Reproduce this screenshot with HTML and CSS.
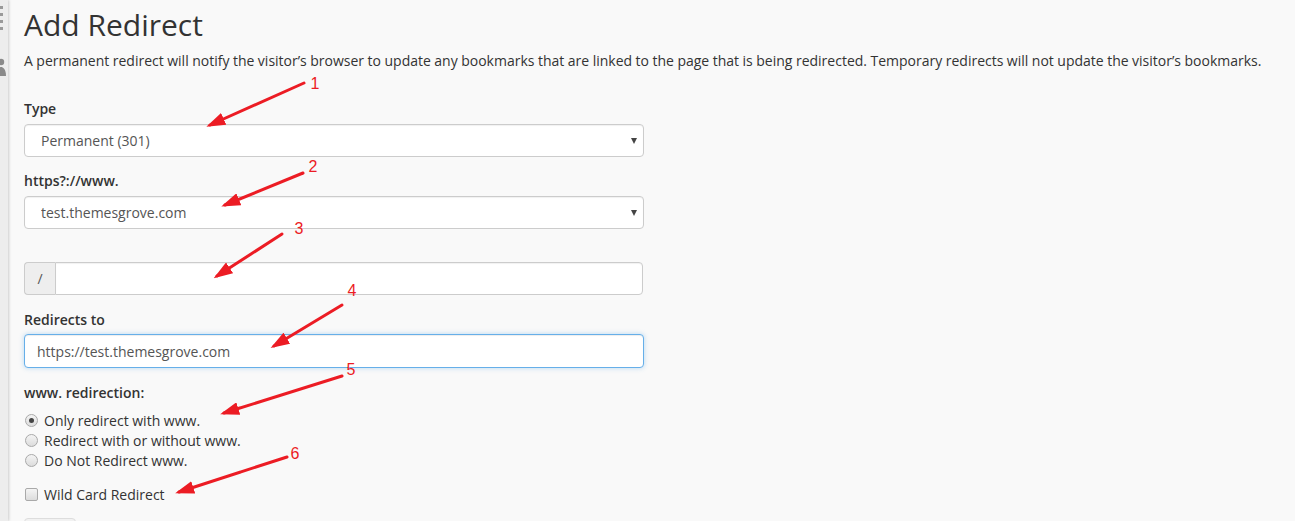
FILE: index.html
```html
<!DOCTYPE html>
<html>
<head>
<meta charset="utf-8">
<link rel="stylesheet" href="styles.css">
</head>
<body>
<div class="page">
  <aside class="sidebar">
    <svg class="side-icons" width="8" height="80" viewBox="0 0 8 80">
      <rect x="0" y="6" width="3" height="3" fill="#9a9a9a"/>
      <rect x="0" y="13" width="3" height="3" fill="#9a9a9a"/>
      <rect x="0" y="20" width="3" height="3" fill="#9a9a9a"/>
      <rect x="0" y="27" width="3" height="3" fill="#9a9a9a"/>
      <circle cx="1" cy="62" r="3.2" fill="#8a8a8a"/>
      <path d="M-4 76 C-4 69 -1 67 1 67 C3 67 6 69 6 76 Z" fill="#8a8a8a"/>
    </svg>
  </aside>
  <main class="main">
    <h1 class="title">Add Redirect</h1>
    <p class="intro">A permanent redirect will notify the visitor’s browser to update any bookmarks that are linked to the page that is being redirected. Temporary redirects will not update the visitor’s bookmarks.</p>

    <div class="form">
      <div class="group">
        <label class="label">Type</label>
        <div class="select-wrap">
          <select class="control select"><option>Permanent (301)</option></select>
        </div>
      </div>

      <div class="group">
        <label class="label">https?://www.</label>
        <div class="select-wrap">
          <select class="control select"><option>test.themesgrove.com</option></select>
        </div>
      </div>

      <div class="group group-nolabel">
        <div class="input-group">
          <span class="addon">/</span>
          <input class="control input-in-group" type="text" value="">
        </div>
      </div>

      <div class="group group-redirect">
        <label class="label">Redirects to</label>
        <input class="control input focused" type="text" value="https://test.themesgrove.com">
      </div>

      <div class="group-radios">
        <div class="label">www. redirection:</div>
        <div class="radios">
          <label class="choice"><span class="radio checked"></span>Only redirect with www.</label>
          <label class="choice"><span class="radio"></span>Redirect with or without www.</label>
          <label class="choice"><span class="radio"></span>Do Not Redirect www.</label>
        </div>
      </div>

      <label class="choice wildcard"><span class="checkbox"></span>Wild Card Redirect</label>

      <div class="button-stub"></div>
    </div>
  </main>

  <svg class="annotations" width="1295" height="521" viewBox="0 0 1295 521">
    <defs>
      <marker id="head" markerUnits="userSpaceOnUse" markerWidth="19" markerHeight="13" refX="15" refY="6.5" orient="auto">
        <path d="M0,0 L19,6.5 L0,13 Z" fill="#ec1c24"/>
      </marker>
    </defs>
    <g stroke="#ec1c24" stroke-width="3" stroke-linecap="round" fill="none">
      <line x1="304" y1="83" x2="210" y2="125" marker-end="url(#head)"/>
      <line x1="303" y1="173" x2="225" y2="205" marker-end="url(#head)"/>
      <line x1="282" y1="234" x2="217" y2="276" marker-end="url(#head)"/>
      <line x1="342" y1="305" x2="274" y2="346" marker-end="url(#head)"/>
      <line x1="342" y1="376" x2="224" y2="413" marker-end="url(#head)"/>
      <line x1="287" y1="457" x2="179" y2="492" marker-end="url(#head)"/>
    </g>
    <g class="nums" fill="#ec1c24" font-family="Liberation Sans, Arial, sans-serif" font-size="16" text-anchor="middle">
      <text x="315" y="89">1</text>
      <text x="313" y="172">2</text>
      <text x="299" y="234">3</text>
      <text x="352" y="296">4</text>
      <text x="351" y="375">5</text>
      <text x="295" y="459">6</text>
    </g>
  </svg>
</div>
</body>
</html>
```

FILE: styles.css
```css
* { box-sizing: border-box; }

html, body {
  margin: 0;
  padding: 0;
  background: #f9f9f9;
  height: 100%;
  overflow: hidden;
}

body {
  font-family: "Open Sans", "Liberation Sans", sans-serif;
  font-size: 14px;
  color: #333;
}

.page {
  position: relative;
  display: flex;
  width: 1295px;
  height: 521px;
}

.sidebar {
  width: 8px;
  flex: none;
  background: #ededed;
  box-shadow: 1px 0 3px rgba(0, 0, 0, 0.18);
  overflow: hidden;
  z-index: 1;
}

.side-icons { display: block; }

.main {
  flex: 1;
  padding: 8px 0 0 16px;
}

.title {
  margin: 0;
  font-size: 30px;
  line-height: 33px;
  font-weight: 400;
  color: #333;
}

.intro {
  margin: 10px 0 0;
  line-height: 20px;
  word-spacing: -0.14px;
}

.form {
  width: 620px;
  margin-top: 28px;
}

.group { margin-bottom: 14px; }

.group-nolabel { padding-top: 19px; }

.label {
  display: block;
  font-weight: 600;
  line-height: 20px;
  margin-bottom: 5px;
}

.group-redirect .label { padding-top: 1px; }
.group-redirect .input { margin-top: -1px; }

.control {
  display: block;
  width: 100%;
  height: 33px;
  font-family: inherit;
  font-size: 14px;
  color: #555;
  background: #fff;
  border: 1px solid #ccc;
  border-radius: 4px;
  box-shadow: inset 0 1px 1px rgba(0, 0, 0, 0.06);
  outline: none;
}

.select-wrap { position: relative; }

.select-wrap::after {
  content: "";
  position: absolute;
  right: 7px;
  top: 14px;
  border-left: 3.5px solid transparent;
  border-right: 3.5px solid transparent;
  border-top: 6px solid #444;
  pointer-events: none;
}

.select {
  appearance: none;
  -webkit-appearance: none;
  padding: 0 0 0 16px;
}

.input-group {
  display: flex;
  width: 619px;
}

.addon {
  flex: none;
  width: 31px;
  height: 33px;
  display: flex;
  align-items: center;
  justify-content: center;
  background: #eee;
  border: 1px solid #ccc;
  border-right: none;
  border-radius: 4px 0 0 4px;
  color: #555;
}

.input-in-group {
  flex: 1;
  border-radius: 0 4px 4px 0;
}

.input { padding: 0 12px; height: 34px; }

.focused {
  border-color: #66afe9;
  box-shadow: inset 0 1px 1px rgba(0, 0, 0, 0.075), 0 0 5px rgba(102, 175, 233, 0.45);
}

.group-radios { margin-top: 15px; }

.group-radios .label { margin-bottom: 7px; }

.choice {
  display: flex;
  align-items: center;
  height: 20px;
  color: #333;
}

.radio, .checkbox {
  flex: none;
  width: 13px;
  height: 13px;
  margin: 0 6px 0 1px;
  border: 1px solid #a9a9a9;
  background: linear-gradient(#f4f4f4, #dcdcdc);
  position: relative;
}

.radio { border-radius: 50%; }

.radio.checked::after {
  content: "";
  position: absolute;
  left: 3px;
  top: 3px;
  width: 5px;
  height: 5px;
  border-radius: 50%;
  background: #444;
}

.checkbox { border-radius: 2px; }

.wildcard { margin-top: 14px; }

.button-stub {
  margin-top: 14px;
  width: 52px;
  height: 20px;
  border: 1px solid #ddd;
  border-radius: 4px;
  background: #f2f2f2;
}

.annotations {
  position: absolute;
  left: 0;
  top: 0;
  pointer-events: none;
  z-index: 2;
}
```
